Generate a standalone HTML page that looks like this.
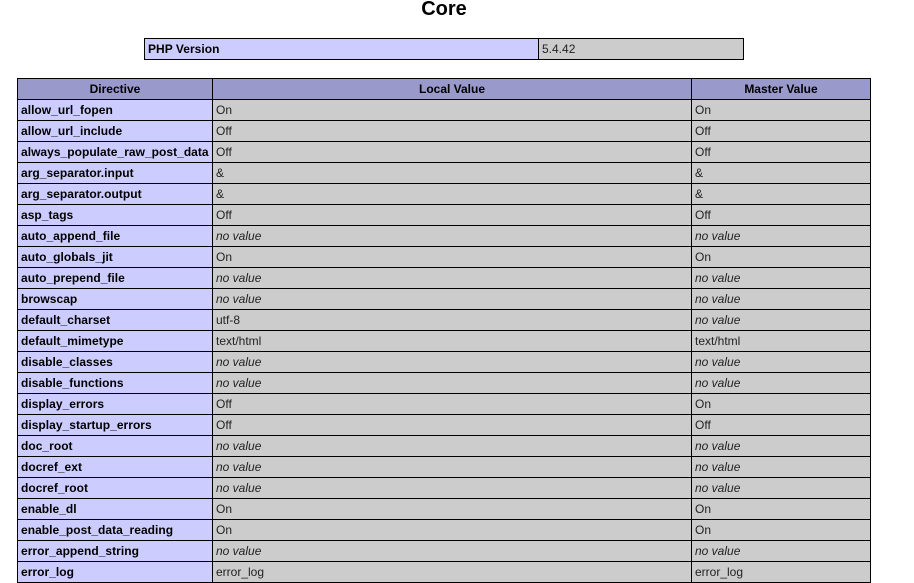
<!DOCTYPE html>
<html><head><meta charset="utf-8"><style>
html,body{margin:0;padding:0;width:914px;height:581px;overflow:hidden;background:#fff;font-family:"Liberation Sans",Arial,sans-serif;color:#000}
h2{position:absolute;left:0;top:-3px;width:888px;margin:0;text-align:center;font-size:20px;line-height:24px;font-weight:bold}
table{position:absolute;border-collapse:collapse;table-layout:fixed;font-size:12px}
td,th{border:1px solid #000;padding:0 3px;height:20px;box-sizing:border-box;line-height:16px;vertical-align:middle;text-align:left;overflow:hidden;white-space:nowrap}
tr{height:21px}
th{background:#99c;text-align:center;font-weight:bold}
.e{background:#ccf;font-weight:bold;letter-spacing:.03px}
.v{background:#ccc;color:#222}
i{color:#222}
#a{left:144px;top:38px;width:600px}
#b{left:17px;top:78px;width:854px}
</style></head><body>
<h2>Core</h2>
<table id="a"><colgroup><col style="width:394px"><col style="width:205px"></colgroup>
<tr><td class="e">PHP Version</td><td class="v">5.4.42</td></tr></table>
<table id="b"><colgroup><col style="width:195px"><col style="width:479px"><col style="width:179px"></colgroup>
<tr><th>Directive</th><th>Local Value</th><th>Master Value</th></tr>
<tr><td class="e">allow_url_fopen</td><td class="v">On</td><td class="v">On</td></tr>
<tr><td class="e">allow_url_include</td><td class="v">Off</td><td class="v">Off</td></tr>
<tr><td class="e">always_populate_raw_post_data</td><td class="v">Off</td><td class="v">Off</td></tr>
<tr><td class="e">arg_separator.input</td><td class="v">&amp;</td><td class="v">&amp;</td></tr>
<tr><td class="e">arg_separator.output</td><td class="v">&amp;</td><td class="v">&amp;</td></tr>
<tr><td class="e">asp_tags</td><td class="v">Off</td><td class="v">Off</td></tr>
<tr><td class="e">auto_append_file</td><td class="v"><i>no value</i></td><td class="v"><i>no value</i></td></tr>
<tr><td class="e">auto_globals_jit</td><td class="v">On</td><td class="v">On</td></tr>
<tr><td class="e">auto_prepend_file</td><td class="v"><i>no value</i></td><td class="v"><i>no value</i></td></tr>
<tr><td class="e">browscap</td><td class="v"><i>no value</i></td><td class="v"><i>no value</i></td></tr>
<tr><td class="e">default_charset</td><td class="v">utf-8</td><td class="v"><i>no value</i></td></tr>
<tr><td class="e">default_mimetype</td><td class="v">text/html</td><td class="v">text/html</td></tr>
<tr><td class="e">disable_classes</td><td class="v"><i>no value</i></td><td class="v"><i>no value</i></td></tr>
<tr><td class="e">disable_functions</td><td class="v"><i>no value</i></td><td class="v"><i>no value</i></td></tr>
<tr><td class="e">display_errors</td><td class="v">Off</td><td class="v">On</td></tr>
<tr><td class="e">display_startup_errors</td><td class="v">Off</td><td class="v">Off</td></tr>
<tr><td class="e">doc_root</td><td class="v"><i>no value</i></td><td class="v"><i>no value</i></td></tr>
<tr><td class="e">docref_ext</td><td class="v"><i>no value</i></td><td class="v"><i>no value</i></td></tr>
<tr><td class="e">docref_root</td><td class="v"><i>no value</i></td><td class="v"><i>no value</i></td></tr>
<tr><td class="e">enable_dl</td><td class="v">On</td><td class="v">On</td></tr>
<tr><td class="e">enable_post_data_reading</td><td class="v">On</td><td class="v">On</td></tr>
<tr><td class="e">error_append_string</td><td class="v"><i>no value</i></td><td class="v"><i>no value</i></td></tr>
<tr><td class="e">error_log</td><td class="v">error_log</td><td class="v">error_log</td></tr>
</table>
</body></html>
